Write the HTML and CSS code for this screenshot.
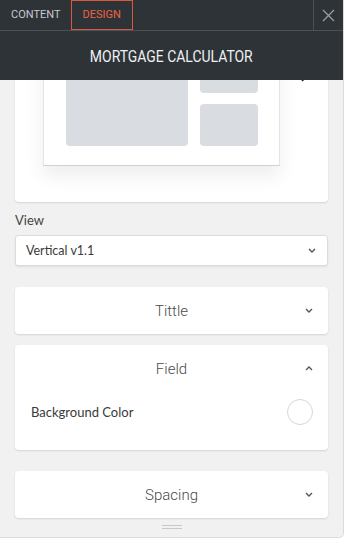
FILE: index.html
```html
<!DOCTYPE html>
<html>
<head>
<meta charset="utf-8">
<link rel="stylesheet" href="styles.css">
</head>
<body>
<div class="panel">
  <div class="header">
    <div class="tabs">
      <div class="tab">CONTENT</div>
      <div class="tab active">DESIGN</div>
      <div class="spacer"></div>
      <div class="close">
        <svg width="13" height="13" viewBox="0 0 13 13"><path d="M1 1L12 12M12 1L1 12" stroke="#9aa0a5" stroke-width="1.2" fill="none"/></svg>
      </div>
    </div>
    <div class="title"><span>MORTGAGE CALCULATOR</span></div>
  </div>
  <div class="content">
    <div class="scroll">
      <div class="card preview">
        <div class="frame">
          <div class="big"></div>
          <div class="col">
            <div class="sm1"></div>
            <div class="sm2"></div>
          </div>
        </div>
        <svg class="arrow" width="8" height="14" viewBox="0 0 8 14"><path d="M1 1L7 7L1 13" stroke="#222" stroke-width="1.6" fill="none"/></svg>
      </div>
      <div class="label">View</div>
      <div class="select">
        <span>Vertical v1.1</span>
        <svg class="chev" width="8" height="5" viewBox="0 0 8 5"><path d="M1 1L4 4L7 1" stroke="#555" stroke-width="1.4" fill="none"/></svg>
      </div>
      <div class="card acc gap-lg">
        <div class="acc-head"><span>Tittle</span>
          <svg class="chev" width="8" height="5" viewBox="0 0 8 5"><path d="M1 1L4 4L7 1" stroke="#555" stroke-width="1.4" fill="none"/></svg>
        </div>
      </div>
      <div class="card acc gap-sm">
        <div class="acc-head"><span>Field</span>
          <svg class="chev" width="8" height="5" viewBox="0 0 8 5"><path d="M1 4L4 1L7 4" stroke="#555" stroke-width="1.4" fill="none"/></svg>
        </div>
        <div class="row">
          <span>Background Color</span>
          <div class="swatch"></div>
        </div>
      </div>
      <div class="card acc gap-lg">
        <div class="acc-head"><span>Spacing</span>
          <svg class="chev" width="8" height="5" viewBox="0 0 8 5"><path d="M1 1L4 4L7 1" stroke="#555" stroke-width="1.4" fill="none"/></svg>
        </div>
      </div>
    </div>
    <div class="handle"></div>
  </div>
</div>
</body>
</html>
```

FILE: styles.css
```css
html, body {
  margin: 0;
  padding: 0;
  background: #ffffff;
}
body {
  font-family: Lato, "Noto Sans", sans-serif;
}
.panel {
  width: 344px;
  height: 538px;
  background: #f1f1f1;
  border-right: 1px solid #dcdcdc;
  border-bottom: 1px solid #dcdcdc;
  border-bottom-right-radius: 5px;
  display: flex;
  flex-direction: column;
  overflow: hidden;
  box-sizing: border-box;
}
.header {
  background: #2e3337;
  flex: none;
}
.tabs {
  display: flex;
  height: 30px;
  border-bottom: 1px solid #4b5156;
}
.tab {
  font-family: Roboto, sans-serif;
  font-size: 11px;
  color: #c5cacf;
  padding: 0 10px 0 11px;
  line-height: 30px;
  box-sizing: border-box;
  height: 30px;
}
.tab.active {
  color: #ee6443;
  border: 1px solid #d8593d;
  line-height: 28px;
  padding: 0 11px;
}
.spacer { flex: 1; }
.close {
  width: 29px;
  border-left: 1px solid #4b5156;
  display: flex;
  align-items: center;
  justify-content: center;
}
.title {
  height: 49px;
  line-height: 50px;
  text-align: center;
  color: #eef0f2;
  font-family: Roboto, sans-serif;
  font-size: 17px;
}
.title span {
  display: inline-block;
  transform: scaleX(0.82);
}
.content {
  flex: 1;
  position: relative;
  overflow: hidden;
}
.scroll {
  padding: 0 15px;
}
.card {
  background: #fff;
  border-radius: 4px;
  box-shadow: 0 1px 2px rgba(0,0,0,0.12);
}
.preview {
  position: relative;
  margin-top: -51px;
  padding: 11px 0 36px 28px;
}
.frame {
  width: 237px;
  box-sizing: border-box;
  border: 1px solid #e2e4e6;
  border-bottom-color: #cfd2d5;
  padding: 12px 0 19px 22px;
  display: flex;
  gap: 12px;
  box-shadow: 0 10px 18px rgba(0,0,0,0.07);
  background: #fff;
}
.big {
  width: 122px;
  height: 93px;
  background: #d9dde1;
  border-radius: 4px;
}
.col {
  display: flex;
  flex-direction: column;
  gap: 11px;
}
.sm1, .sm2 {
  width: 58px;
  background: #d9dde1;
  border-radius: 4px;
}
.sm1 { height: 40px; }
.sm2 { height: 42px; }
.arrow {
  position: absolute;
  left: 286px;
  top: 39px;
}
.label {
  font-size: 13px;
  color: #444;
  margin-top: 10px;
  line-height: 16px;
}
.select {
  margin-top: 7px;
  height: 31px;
  box-sizing: border-box;
  background: #fff;
  border: 1px solid #dcdcdc;
  border-radius: 3px;
  box-shadow: 0 1px 2px rgba(0,0,0,0.08);
  display: flex;
  align-items: center;
  padding: 0 11px 0 10px;
  justify-content: space-between;
  font-size: 12.5px;
  color: #3a3a3a;
}
.gap-lg { margin-top: 21px; }
.gap-sm { margin-top: 11px; }
.acc-head {
  height: 47px;
  position: relative;
  display: flex;
  align-items: center;
  justify-content: center;
  font-family: Roboto, sans-serif;
  font-weight: 300;
  font-size: 15px;
  color: #4a4a4a;
}
.acc-head .chev {
  position: absolute;
  right: 15px;
  top: 21px;
}
.row {
  display: flex;
  align-items: center;
  justify-content: space-between;
  padding: 7px 15px 25px 16px;
  font-size: 13px;
  color: #3a3a3a;
}
.swatch {
  width: 26px;
  height: 26px;
  box-sizing: border-box;
  border: 1px solid #d6d6d6;
  border-radius: 50%;
  background: #fff;
}
.handle {
  position: absolute;
  left: 162px;
  bottom: 8px;
  width: 20px;
  height: 4px;
  border-top: 1px solid #c8c8c8;
  border-bottom: 1px solid #c8c8c8;
  box-sizing: border-box;
}
```
